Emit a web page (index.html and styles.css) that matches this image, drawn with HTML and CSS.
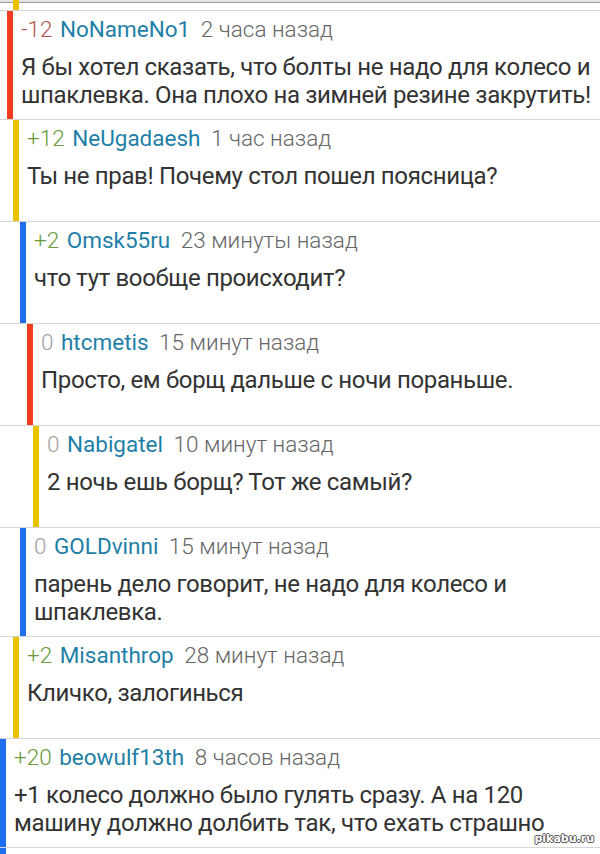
FILE: index.html
```html
<!DOCTYPE html>
<html lang="ru">
<head>
  <meta charset="UTF-8">
  <title>Комментарии</title>
  <link rel="stylesheet" href="styles.css">
</head>
<body>
  <div class="thread">
    <div class="comment tail lvl-2">
      <div class="inner yellow"></div>
    </div>

    <div class="comment lvl-1">
      <div class="inner red">
        <div class="head"><span class="rating minus">-12</span> <span class="user">NoNameNo1</span> <span class="time">2 часа назад</span></div>
        <div class="text">Я бы хотел сказать, что болты не надо для колесо и шпаклевка. Она плохо на зимней резине закрутить!</div>
      </div>
    </div>

    <div class="comment lvl-2">
      <div class="inner yellow">
        <div class="head"><span class="rating plus">+12</span> <span class="user">NeUgadaesh</span> <span class="time">1 час назад</span></div>
        <div class="text">Ты не прав! Почему стол пошел поясница?</div>
      </div>
    </div>

    <div class="comment lvl-3">
      <div class="inner blue">
        <div class="head"><span class="rating plus">+2</span> <span class="user">Omsk55ru</span> <span class="time">23 минуты назад</span></div>
        <div class="text">что тут вообще происходит?</div>
      </div>
    </div>

    <div class="comment lvl-4">
      <div class="inner red">
        <div class="head"><span class="rating zero">0</span> <span class="user">htcmetis</span> <span class="time">15 минут назад</span></div>
        <div class="text">Просто, ем борщ дальше с ночи пораньше.</div>
      </div>
    </div>

    <div class="comment lvl-5">
      <div class="inner yellow">
        <div class="head"><span class="rating zero">0</span> <span class="user">Nabigatel</span> <span class="time">10 минут назад</span></div>
        <div class="text">2 ночь ешь борщ? Тот же самый?</div>
      </div>
    </div>

    <div class="comment lvl-3">
      <div class="inner blue">
        <div class="head"><span class="rating zero">0</span> <span class="user">GOLDvinni</span> <span class="time">15 минут назад</span></div>
        <div class="text">парень дело говорит, не надо для колесо и шпаклевка.</div>
      </div>
    </div>

    <div class="comment lvl-2">
      <div class="inner yellow">
        <div class="head"><span class="rating plus">+2</span> <span class="user">Misanthrop</span> <span class="time">28 минут назад</span></div>
        <div class="text">Кличко, залогинься</div>
      </div>
    </div>

    <div class="comment lvl-0">
      <div class="inner blue">
        <div class="head"><span class="rating plus">+20</span> <span class="user">beowulf13th</span> <span class="time">8 часов назад</span></div>
        <div class="text">+1 колесо должно было гулять сразу. А на 120 машину должно долбить так, что ехать страшно</div>
      </div>
    </div>

    <div class="comment lvl-0">
      <div class="inner blue">
        <div class="head"><span class="rating plus">+14</span> <span class="user">Misanthrop</span> <span class="time">7 часов назад</span></div>
        <div class="text">&nbsp;</div>
      </div>
    </div>
  </div>

  <div class="watermark">pikabu.ru</div>
</body>
</html>
```

FILE: styles.css
```css
html, body {
  margin: 0;
  padding: 0;
  background: #fff;
  height: 854px;
  overflow: hidden;
}

body {
  font-family: Roboto, "Noto Sans", sans-serif;
  position: relative;
}

.comment {
  border-top: 1px solid #d6d6d6;
}

.comment .inner {
  border-left: 6px solid transparent;
  padding: 1px 0 10px 8px;
}

.comment.tail {
  border-top: 0;
  height: 10px;
  background: linear-gradient(#e4e4e4 0, #e4e4e4 2px, #9c9c9c 2px, #9c9c9c 3px, #fff 3px);
}

.comment.tail .inner {
  height: 10px;
  padding: 0;
  box-sizing: border-box;
}

/* indent levels */
.lvl-0 .inner { margin-left: 0; }
.lvl-1 .inner { margin-left: 7px; }
.lvl-2 .inner { margin-left: 13px; }
.lvl-3 .inner { margin-left: 20px; }
.lvl-4 .inner { margin-left: 27px; }
.lvl-5 .inner { margin-left: 33px; }

.inner.red { border-left-color: #f23b1f; }
.inner.yellow { border-left-color: #e7c300; }
.inner.blue { border-left-color: #1f6ff0; }

.head {
  height: 34px;
  line-height: 34px;
  font-size: 22.5px;
  font-weight: 300;
  white-space: nowrap;
}

.rating {
  margin-right: 2px;
}

.rating.minus { color: #b4544c; }
.rating.plus { color: #6a9a3c; }
.rating.zero { color: #a0a0a0; }

.user {
  color: #1f7fa7;
  font-weight: 400;
  margin-right: 5px;
}

.time {
  color: #666;
}

.text {
  margin-top: 8px;
  min-height: 48px;
  font-size: 24px;
  letter-spacing: -0.35px;
  line-height: 27.5px;
  color: #333;
}

.watermark {
  position: absolute;
  right: 6px;
  bottom: 9px;
  font-family: "DejaVu Sans", sans-serif;
  font-size: 11px;
  font-weight: bold;
  color: #fff;
  text-shadow: 1px 0 0 #555, -1px 0 0 #555, 0 1px 0 #555, 0 -1px 0 #555;
}
```
